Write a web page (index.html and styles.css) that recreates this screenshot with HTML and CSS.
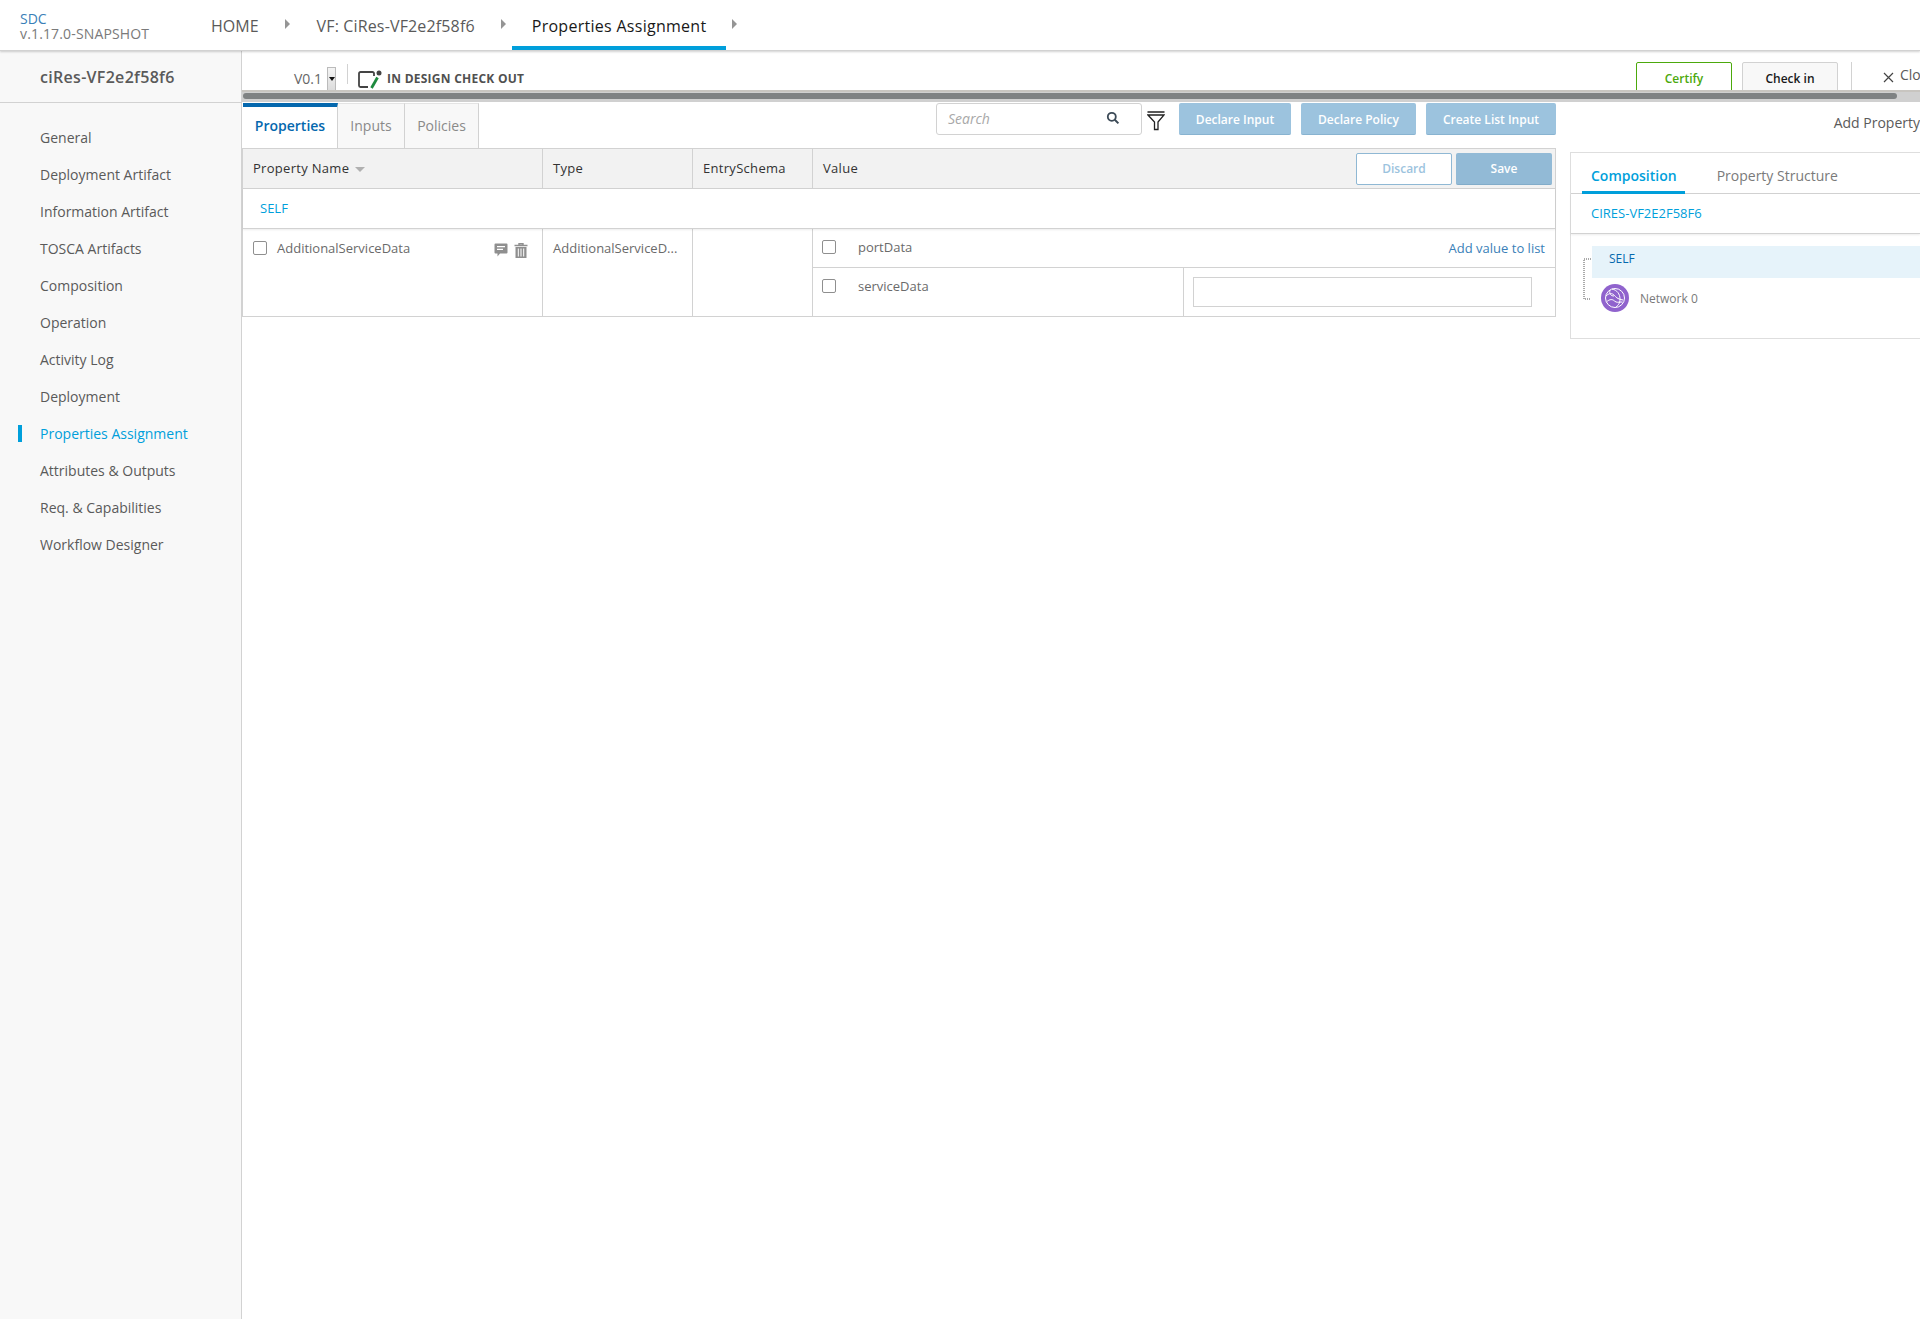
FILE: index.html
```html
<!DOCTYPE html>
<html lang="en">
<head>
<meta charset="utf-8">
<title>SDC Properties Assignment</title>
<link rel="stylesheet" href="styles.css">
</head>
<body>
<div class="app">
  <header class="topbar">
    <div class="brand"><div class="brand-name">SDC</div><div class="brand-ver">v.1.17.0-SNAPSHOT</div></div>
    <nav class="crumbs">
      <div class="crumb crumb-home">HOME</div><span class="caret"></span>
      <div class="crumb crumb-vf">VF: CiRes-VF2e2f58f6</div><span class="caret"></span>
      <div class="crumb crumb-active">Properties Assignment</div><span class="caret"></span>
    </nav>
  </header>
  <div class="body">
    <aside class="sidebar">
      <div class="side-title">ciRes-VF2e2f58f6</div>
      <ul class="side-nav">
        <li>General</li>
        <li>Deployment Artifact</li>
        <li>Information Artifact</li>
        <li>TOSCA Artifacts</li>
        <li>Composition</li>
        <li>Operation</li>
        <li>Activity Log</li>
        <li>Deployment</li>
        <li class="active">Properties Assignment</li>
        <li>Attributes &amp; Outputs</li>
        <li>Req. &amp; Capabilities</li>
        <li>Workflow Designer</li>
      </ul>
    </aside>
    <main class="main">
      <div class="wshead">
        <span class="version">V0.1</span>
        <span class="select-arrow"><i></i></span>
        <span class="vdiv"></span>
        <svg class="state-icon" width="24" height="21" viewBox="0 0 24 21">
          <path d="M16 8V5.5a1.5 1.5 0 0 0-1.5-1.5H2.5A1.5 1.5 0 0 0 1 5.500V17.500A1.500 1.500 0 0 0 2.500 19H10" fill="none" stroke="#444" stroke-width="1.8"/>
          <circle cx="21" cy="5" r="2.500" fill="#444"/>
          <path d="M19.500 9.500L13.500 20" stroke="#1e8a3e" stroke-width="2.800" fill="none"/>
        </svg>
        <span class="state-text">IN DESIGN CHECK OUT</span>
        <div class="wsactions">
          <span class="btn-certify">Certify</span>
          <span class="btn-checkin">Check in</span>
          <span class="vdiv2"></span>
          <svg class="x-icon" width="11" height="11" viewBox="0 0 11 11"><path d="M1 1l9 9M10 1l-9 9" stroke="#444" stroke-width="1.2"/></svg>
          <span class="close-text">Close</span>
        </div>
      </div>
      <div class="hscroll"><div class="hthumb"></div></div>
      <div class="content">
        <section class="left">
          <div class="toolbar">
            <div class="tabs">
              <div class="tab tab-active">Properties</div>
              <div class="tab tab-inputs">Inputs</div>
              <div class="tab tab-policies">Policies</div>
            </div>
            <div class="search">
              <span class="search-ph">Search</span>
              <svg width="14" height="14" viewBox="0 0 14 14"><circle cx="5.800" cy="5.800" r="4" fill="none" stroke="#3c4a57" stroke-width="1.800"/><path d="M8.800 8.800l3.600 3.600" stroke="#3c4a57" stroke-width="2"/></svg>
            </div>
            <svg class="filter" width="18" height="20" viewBox="0 0 18 20"><path d="M0.500 1h17M1 4h16L11 11v7.500H7.500V11z" fill="none" stroke="#222" stroke-width="1.300"/></svg>
            <span class="btn-blue btn-b1">Declare Input</span>
            <span class="btn-blue btn-b2">Declare Policy</span>
            <span class="btn-blue btn-b3">Create List Input</span>
          </div>
          <div class="table">
            <div class="thead">
              <div class="th th-name">Property Name<i class="sort"></i></div>
              <div class="th">Type</div>
              <div class="th">EntrySchema</div>
              <div class="th th-value">Value
                <span class="btn-discard">Discard</span>
                <span class="btn-save">Save</span>
              </div>
            </div>
            <div class="self-row">SELF</div>
            <div class="trow">
              <div class="td td-name">
                <span class="check"></span>
                <span class="name">AdditionalServiceData</span>
                <svg class="ic-comment" width="14" height="14" viewBox="0 0 14 14"><path d="M1.500 0.500h11a1 1 0 0 1 1 1v8a1 1 0 0 1-1 1H6L3.500 13.500v-3h-2a1 1 0 0 1-1-1v-8a1 1 0 0 1 1-1z" fill="#8f8f8f"/><path d="M3 3.600h8M3 6.400h6" stroke="#fff" stroke-width="1.200"/></svg>
                <svg class="ic-trash" width="14" height="15" viewBox="0 0 14 15"><path d="M0.500 2.500h13M5 2.500V0.800h4v1.700" fill="none" stroke="#8f8f8f" stroke-width="1.400"/><path d="M1.500 4h11v11h-11z" fill="#8f8f8f"/><path d="M4.300 5.500v8M7 5.500v8M9.700 5.500v8" stroke="#fff" stroke-width="1"/></svg>
              </div>
              <div class="td td-type">AdditionalServiceD...</div>
              <div class="td"></div>
              <div class="td td-value">
                <div class="sub sub-1">
                  <span class="check check-sm"></span>
                  <span class="sub-name">portData</span>
                  <span class="add-link">Add value to list</span>
                </div>
                <div class="sub sub-2">
                  <div class="sub-left"><span class="check check-sm"></span><span class="sub-name">serviceData</span></div>
                  <div class="sub-right"><div class="fake-input"></div></div>
                </div>
              </div>
            </div>
          </div>
        </section>
        <section class="right">
          <div class="add-prop">Add Property</div>
          <div class="panel">
            <div class="ptabs">
              <div class="ptab ptab-active">Composition</div>
              <div class="ptab">Property Structure</div>
            </div>
            <div class="pcrumb">CIRES-VF2E2F58F6</div>
            <div class="tree">
              <svg class="tree-lines" width="9" height="42" viewBox="0 0 9 42"><path d="M8 1H1V41H8" fill="none" stroke="#555" stroke-dasharray="1 1"/></svg>
              <div class="tree-items">
                <div class="tree-self">SELF</div>
                <div class="tree-node">
                  <svg width="28" height="28" viewBox="0 0 28 28">
                    <circle cx="14" cy="14" r="14" fill="#9063cd"/>
                    <g fill="none" stroke="#fff" stroke-width="1">
                      <circle cx="14" cy="14" r="9.500"/>
                      <path d="M5 12c3-3 6-3 8-1s3 4 9 5M5.500 18c3-3 6-3 8-1s4 1 8 1M11 5c5 1 8 5 8 10s-2 6-4 8M9 6c-1 4 1 6 4 6"/>
                    </g>
                  </svg>
                  <span>Network 0</span>
                </div>
              </div>
            </div>
          </div>
        </section>
      </div>
    </main>
  </div>
</div>
</body>
</html>
```
FILE: styles.css
```css
* { box-sizing: border-box; }
html, body { margin: 0; padding: 0; background: #fff; }
body { font-family: "Open Sans", sans-serif; font-size: 13px; color: #5a5a5a; }
.app { width: 1920px; height: 1319px; overflow: hidden; display: flex; flex-direction: column; }

.topbar { height: 51px; flex: none; display: flex; background: #fff; border-bottom: 1px solid #d2d2d2; box-shadow: 0 1px 2px rgba(0,0,0,.18); position: relative; z-index: 2; }
.brand { width: 192px; padding: 11px 0 0 20px; line-height: 15px; font-size: 14px; white-space: nowrap; }
.brand-name { color: #3a7fb8; }
.brand-ver { color: #7a7a7a; letter-spacing: .15px; }
.crumbs { display: flex; align-items: flex-start; font-size: 16px; color: #5a5a5a; }
.crumb { height: 50px; line-height: 52px; white-space: nowrap; }
.crumb-home { margin-left: 19px; }
.caret { width: 0; height: 0; margin-top: 19px; border-left: 5px solid #959595; border-top: 5px solid transparent; border-bottom: 5px solid transparent; }
.crumb-home + .caret { margin-left: 26px; }
.crumb-vf { margin-left: 27px; letter-spacing: .15px; }
.crumb-vf + .caret { margin-left: 26px; }
.crumb-active { margin-left: 6px; padding: 0 20px; color: #191919; border-bottom: 4px solid #009fdb; letter-spacing: .28px; }
.crumb-active + .caret { margin-left: 6px; }

.body { flex: 1; display: flex; min-height: 0; }
.sidebar { width: 242px; flex: none; background: #f8f8f8; border-right: 1px solid #d2d2d2; }
.side-title { height: 52px; border-bottom: 1px solid #d2d2d2; padding-left: 40px; line-height: 52px; font-size: 16px; font-weight: 600; color: #5a5a5a; letter-spacing: .3px; }
.side-nav { list-style: none; margin: 0; padding: 16px 0 0 18px; font-size: 14px; }
.side-nav li { height: 37px; line-height: 37px; padding-left: 22px; }
.side-nav .active { color: #009fdb; position: relative; }
.side-nav .active::before { content: ""; position: absolute; left: 0; top: 10px; width: 4px; height: 17px; background: #009fdb; }

.main { flex: 1; min-width: 0; display: flex; flex-direction: column; }
.wshead { height: 39px; flex: none; display: flex; align-items: flex-start; overflow: hidden; background: #fff; }
.version { margin: 18px 0 0 52px; font-size: 14px; line-height: 20px; color: #666; }
.select-arrow { width: 9px; height: 24px; margin: 16px 0 0 5px; background: linear-gradient(#f4f4f4, #dcdcdc); border: 1px solid #bbb; display: flex; align-items: center; justify-content: center; }
.select-arrow i { width: 0; height: 0; border-left: 3px solid transparent; border-right: 3px solid transparent; border-top: 4px solid #111; }
.vdiv { width: 1px; height: 20px; margin: 13px 0 0 11px; background: #d2d2d2; }
.state-icon { margin: 17px 0 0 10px; flex: none; }
.state-text { margin: 19px 0 0 5px; font-size: 12px; line-height: 18px; font-weight: 700; color: #505050; white-space: nowrap; letter-spacing: .25px; }
.wsactions { margin-left: auto; width: 284px; flex: none; display: flex; align-items: flex-start; overflow: hidden; font-size: 12px; }
.btn-certify, .btn-checkin { flex: none; width: 96px; height: 40px; margin-top: 11px; text-align: center; line-height: 32px; font-weight: 600; border-radius: 2px; }
.btn-certify { border: 1px solid #4ca90c; color: #4ca90c; }
.btn-checkin { margin-left: 10px; border: 1px solid #d2d2d2; background: #f8f8f8; color: #191919; }
.vdiv2 { flex: none; width: 1px; height: 28px; margin: 11px 0 0 13px; background: #d2d2d2; }
.x-icon { flex: none; margin: 21px 0 0 31px; }
.close-text { flex: none; margin: 14px 0 0 6px; font-size: 14px; line-height: 20px; color: #5a5a5a; }

.hscroll { height: 12px; flex: none; background: linear-gradient(#c8c5c0 0 2px, #d0d0d0 2px); padding: 3px 0 3px 1px; }
.hthumb { width: 1654px; height: 6px; border-radius: 3px; background: #7f8283; }

.content { flex: 1; display: flex; padding: 1px 0 0 1px; gap: 14px; min-height: 0; }
.left { width: 1313px; flex: none; }
.toolbar { height: 45px; display: flex; align-items: flex-start; }
.tabs { display: flex; height: 45px; width: 693px; flex: none; }
.tab { font-size: 14px; text-align: center; line-height: 44px; background: #f8f8f8; border-right: 1px solid #d2d2d2; border-top: 1px solid #e4e4e4; color: #8a8a8a; }
.tab-active { width: 95px; background: #fff; color: #0568ae; font-weight: 600; border-top: 4px solid #0568ae; line-height: 38px; }
.tab-inputs { width: 67px; }
.tab-policies { width: 74px; }
.search { width: 206px; height: 32px; flex: none; border: 1px solid #d2d2d2; border-radius: 3px; display: flex; align-items: center; justify-content: space-between; padding: 0 21px 2px 11px; background: #fff; }
.search-ph { font-size: 14px; font-style: italic; color: #a8a8a8; }
.filter { flex: none; margin: 8px 0 0 5px; }
.btn-blue { height: 32px; flex: none; background: #9cc3de; border-bottom: 1px solid #88b3d0; border-radius: 2px; color: #fff; font-size: 12px; font-weight: 600; text-align: center; line-height: 33px; }
.btn-b1 { width: 112px; margin-left: 14px; }
.btn-b2 { width: 115px; margin-left: 10px; }
.btn-b3 { width: 130px; margin-left: 10px; }

.table { border-left: 1px solid #d2d2d2; border-right: 1px solid #d2d2d2; width: 1314px; margin-left: -1px; }
.thead { display: grid; grid-template-columns: 300px 150px 120px 1fr; height: 41px; background: #f2f2f2; border-top: 1px solid #d2d2d2; border-bottom: 1px solid #d2d2d2; }
.th { border-right: 1px solid #d2d2d2; padding-left: 10px; line-height: 39px; font-size: 13px; color: #333; display: flex; align-items: center; letter-spacing: .3px; }
.sort { width: 0; height: 0; margin: 2px 0 0 6px; border-left: 5px solid transparent; border-right: 5px solid transparent; border-top: 5px solid #b0b0b0; }
.th-value { border-right: 0; }
.btn-discard, .btn-save { width: 96px; height: 32px; text-align: center; line-height: 30px; font-size: 12px; font-weight: 600; border-radius: 2px; letter-spacing: 0; }
.btn-discard { margin-left: auto; border: 1px solid #8fb8d4; background: #fff; color: #9cc3de; }
.btn-save { margin: 0 3px 0 4px; background: #92bad6; color: #fff; border-bottom: 1px solid #82acc9; line-height: 32px; }
.self-row { height: 40px; line-height: 38px; padding-left: 17px; font-size: 13px; color: #009fdb; border-bottom: 1px solid #d2d2d2; box-shadow: 0 1px 2px rgba(0,0,0,.08); position: relative; }
.trow { display: grid; grid-template-columns: 300px 150px 120px 1fr; height: 88px; border-bottom: 1px solid #d2d2d2; }
.td { border-right: 1px solid #d2d2d2; font-size: 13px; color: #6a6a6a; }
.td-name { display: flex; align-items: flex-start; padding: 11px 0 0 10px; }
.check { flex: none; width: 14px; height: 14px; background: #fff; border: 1px solid #8f8f8f; border-radius: 2px; margin-top: 1px; }
.name { margin-left: 10px; line-height: 16px; }
.ic-comment { margin: 3px 0 0 auto; }
.ic-trash { margin: 3px 14px 0 6px; }
.td-type { padding: 10px 0 0 10px; line-height: 18px; white-space: nowrap; }
.td-value { border-right: 0; display: flex; flex-direction: column; }
.sub { display: flex; }
.sub-1 { height: 39px; border-bottom: 1px solid #d2d2d2; padding: 10px 10px 0 9px; align-items: flex-start; }
.sub-2 { flex: 1; }
.sub-left { width: 371px; border-right: 1px solid #d2d2d2; padding: 10px 0 0 9px; display: flex; align-items: flex-start; }
.sub-right { flex: 1; padding: 9px 0 0 9px; }
.fake-input { width: 339px; height: 30px; border: 1px solid #d2d2d2; background: #fff; }
.sub-name { margin-left: 22px; line-height: 17px; font-size: 13px; color: #6a6a6a; }
.add-link { margin-left: auto; color: #3a7fb8; line-height: 18px; font-size: 13px; }

.right { flex: 1; min-width: 0; }
.add-prop { height: 49px; text-align: right; font-size: 14px; line-height: 39px; color: #5a5a5a; white-space: nowrap; }
.panel { height: 187px; border: 1px solid #dedede; border-right: 0; }
.ptabs { height: 41px; display: flex; border-bottom: 1px solid #d2d2d2; padding-left: 11px; }
.ptab { padding: 11px 9px 0; font-size: 14px; line-height: 24px; margin-right: 22px; color: #7a7a7a; }
.ptab-active { color: #009fdb; font-weight: 600; height: 41px; border-bottom: 3px solid #009fdb; margin-right: 23px; padding-right: 8px; }
.pcrumb { height: 40px; line-height: 39px; padding-left: 20px; font-size: 13px; color: #009fdb; border-bottom: 1px solid #d2d2d2; box-shadow: 0 1px 2px rgba(0,0,0,.08); position: relative; }
.tree { display: flex; padding: 12px 0 0 12px; }
.tree-lines { flex: none; margin-top: 12px; }
.tree-items { flex: 1; }
.tree-self { height: 32px; line-height: 26px; background: #e6f3fa; padding-left: 17px; font-size: 12px; color: #0568ae; }
.tree-node { display: flex; align-items: center; margin-top: 6px; padding-left: 9px; font-size: 12px; color: #7a7a7a; }
.tree-node span { margin-left: 11px; }
```
